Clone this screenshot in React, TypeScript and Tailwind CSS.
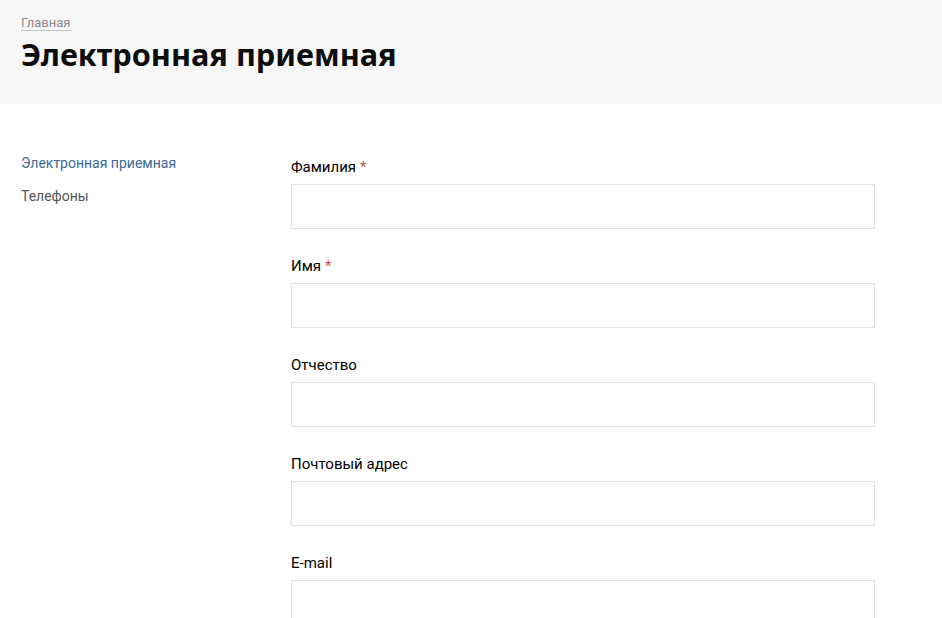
const fields = [
  { label: "Фамилия", required: true },
  { label: "Имя", required: true },
  { label: "Отчество", required: false },
  { label: "Почтовый адрес", required: false },
  { label: "E-mail", required: false },
];

export default function App() {
  return (
    <div className="min-h-screen bg-white font-['Roboto',sans-serif]">
      <header className="h-[104px] bg-[#f7f7f7] px-[21px] pt-[10px]">
        <a href="#" className="text-[13px] leading-[18px] text-[#8a8a8a] underline decoration-[#c4c4c4] underline-offset-[3px]">
          Главная
        </a>
        <h1 className="font-['Noto_Sans',sans-serif] text-[30.7px] font-bold leading-[40px] text-[#0d0d0d]">
          Электронная приемная
        </h1>
      </header>

      <div className="flex px-[21px] pt-[49px]">
        <nav className="flex w-[270px] shrink-0 flex-col gap-[14px] pt-[1px] text-[14px] leading-[19px]">
          <a href="#" className="text-[#3b6a94]">Электронная приемная</a>
          <a href="#" className="text-[#555]">Телефоны</a>
        </nav>

        <form className="flex w-[584px] flex-col gap-[27px] pt-[4px]">
          {fields.map((f) => (
            <div key={f.label} className="flex flex-col gap-[7px]">
              <label className="text-[15px] font-normal leading-[20px] text-black">
                {f.label}
                {f.required && <span className="ml-[4px] text-[#c0504d]">*</span>}
              </label>
              <input className="h-[45px] w-full border border-[#e2e2e2] bg-white px-3 outline-none" />
            </div>
          ))}
        </form>
      </div>
    </div>
  );
}
